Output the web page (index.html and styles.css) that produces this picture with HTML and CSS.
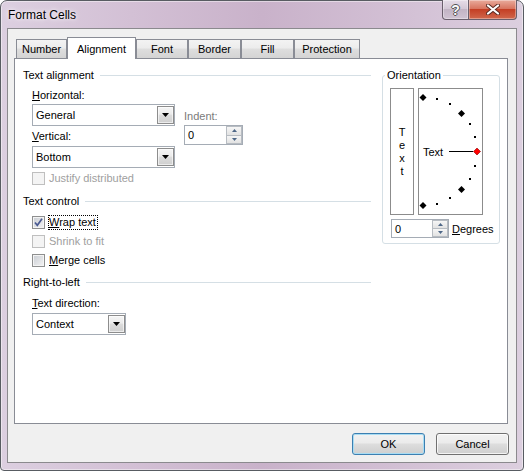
FILE: index.html
```html
<!DOCTYPE html>
<html>
<head>
<meta charset="utf-8">
<title>Format Cells</title>
<link rel="stylesheet" href="styles.css">
</head>
<body>
<div class="window">
  <div class="titlebar">
    <div class="title">Format Cells</div>
    <div class="caption-btns">
      <div class="cbtn help"><span>?</span></div>
      <div class="cbtn close">
        <svg width="14" height="11" viewBox="0 0 14 11">
          <path d="M2 1.5 L12 9.5 M12 1.5 L2 9.5" stroke="#5a2a22" stroke-width="4" stroke-linecap="round"/>
          <path d="M2 1.5 L12 9.5 M12 1.5 L2 9.5" stroke="#ffffff" stroke-width="2.2" stroke-linecap="round"/>
        </svg>
      </div>
    </div>
  </div>
  <div class="client">
    <div class="tabs">
      <div class="tab t-number">Number</div>
      <div class="tab sel t-align">Alignment</div>
      <div class="tab t-font">Font</div>
      <div class="tab t-border">Border</div>
      <div class="tab t-fill">Fill</div>
      <div class="tab t-prot">Protection</div>
    </div>
    <div class="panel">
      <div class="leftcol">
        <div class="shead">Text alignment</div>
        <div class="align-body">
          <div class="align-left">
            <div class="lbl lbl-h"><u>H</u>orizontal:</div>
            <div class="combo combo-h"><span>General</span><span class="dd"><svg width="7" height="4" viewBox="0 0 7 4"><path d="M0 0h7l-3.5 4z"/></svg></span></div>
            <div class="lbl lbl-v"><u>V</u>ertical:</div>
            <div class="combo combo-v"><span>Bottom</span><span class="dd"><svg width="7" height="4" viewBox="0 0 7 4"><path d="M0 0h7l-3.5 4z"/></svg></span></div>
          </div>
          <div class="indent">
            <div class="lbl gray">Indent:</div>
            <div class="spin spin-indent"><span>0</span>
              <span class="spinbtns">
                <b><svg width="5" height="3" viewBox="0 0 5 3"><path d="M0 3h5L2.5 0z"/></svg></b>
                <b><svg width="5" height="3" viewBox="0 0 5 3"><path d="M0 0h5L2.5 3z"/></svg></b>
              </span>
            </div>
          </div>
        </div>
        <div class="crow r-justify disabled"><span class="cb"></span><span class="clbl">Justify distributed</span></div>
        <div class="shead h-control">Text control</div>
        <div class="crow r-wrap"><span class="cb"><svg width="11" height="11" viewBox="0 0 11 11"><path d="M2 5.5 L4.3 8.3 L9 1.8" fill="none" stroke="#4a5a92" stroke-width="1.7"/></svg></span><span class="clbl focus"><u>W</u>rap text</span></div>
        <div class="crow r-shrink disabled"><span class="cb"></span><span class="clbl">Shrink to fit</span></div>
        <div class="crow r-merge"><span class="cb"></span><span class="clbl"><u>M</u>erge cells</span></div>
        <div class="shead h-rtl">Right-to-left</div>
        <div class="lbl lbl-dir"><u>T</u>ext direction:</div>
        <div class="combo combo-dir"><span>Context</span><span class="dd"><svg width="7" height="4" viewBox="0 0 7 4"><path d="M0 0h7l-3.5 4z"/></svg></span></div>
      </div>
      <div class="rightcol">
        <div class="group">
          <div class="legend">Orientation</div>
          <div class="orient">
            <div class="vtext"><span>T</span><span>e</span><span>x</span><span>t</span></div>
            <div class="dial">
              <svg width="63" height="125" viewBox="0 0 63 125">
                <g fill="#000">
                  <polygon points="4,5 7.5,8.5 4,12 0.5,8.5"/>
                  <polygon points="42.5,21 46,24.5 42.5,28 39,24.5"/>
                  <polygon points="42.5,97 46,100.5 42.5,104 39,100.5"/>
                  <polygon points="4,113 7.5,116.5 4,120 0.5,116.5"/>
                  <rect x="17" y="9" width="2" height="2"/>
                  <rect x="30" y="14" width="2" height="2"/>
                  <rect x="50" y="34" width="2" height="2"/>
                  <rect x="55" y="47" width="2" height="2"/>
                  <rect x="55" y="76" width="2" height="2"/>
                  <rect x="50" y="89" width="2" height="2"/>
                  <rect x="30" y="108" width="2" height="2"/>
                  <rect x="17" y="114" width="2" height="2"/>
                  <rect x="30" y="62" width="24" height="1"/>
                </g>
                <polygon points="58,59 61.5,62.5 58,66 54.5,62.5" fill="#ff0000" stroke="#8a0000" stroke-width="0.6"/>
                <text x="4" y="67" class="dial-text">Text</text>
              </svg>
            </div>
          </div>
          <div class="degrow">
            <div class="spin spin-deg"><span>0</span>
              <span class="spinbtns">
                <b><svg width="5" height="3" viewBox="0 0 5 3"><path d="M0 3h5L2.5 0z"/></svg></b>
                <b><svg width="5" height="3" viewBox="0 0 5 3"><path d="M0 0h5L2.5 3z"/></svg></b>
              </span>
            </div>
            <span class="deglbl"><u>D</u>egrees</span>
          </div>
        </div>
      </div>
    </div>
    <div class="btnrow">
      <div class="btn def">OK</div>
      <div class="btn">Cancel</div>
    </div>
  </div>
</div>
</body>
</html>
```

FILE: styles.css
```css
* { box-sizing: border-box; }
html, body { margin: 0; padding: 0; }
body {
  width: 524px;
  height: 471px;
  overflow: hidden;
  background: #ffffff;
  font-family: "Liberation Sans", Arial, sans-serif;
  font-size: 11px;
  color: #000;
}
u { text-decoration: underline; text-underline-offset: 1px; }

.window {
  width: 524px;
  height: 471px;
  border: 1px solid #585c62;
  border-radius: 7px 7px 4px 4px;
  background: linear-gradient(90deg, #dccfe0 0%, #d3c0d5 25%, #c9b2ca 50%, #d2bfd4 75%, #dccfdf 100%);
  box-shadow: inset 0 0 0 1px rgba(255, 255, 255, 0.45);
  padding: 0 6px 7px 6px;
  display: flex;
  flex-direction: column;
}

.titlebar {
  height: 27px;
  display: flex;
  justify-content: space-between;
  align-items: flex-start;
}
.title {
  margin: 7px 0 0 1px;
  font-size: 12px;
  line-height: 14px;
  color: #000;
  text-shadow: 0 0 6px #fff, 0 0 3px #f4eef5;
}
.caption-btns {
  display: flex;
  margin-top: -1px;
}
.cbtn {
  height: 20px;
  border: 1px solid #6a5f6c;
  border-top: none;
  display: flex;
  align-items: center;
  justify-content: center;
  box-shadow: inset 0 0 0 1px rgba(255, 255, 255, 0.35);
}
.help {
  width: 27px;
  border-radius: 0 0 0 4px;
  background: linear-gradient(#e6dde8, #d4c8d6 45%, #c2b4c4 50%, #d0c3d2);
}
.help span {
  font-weight: bold;
  font-size: 14px;
  line-height: 14px;
  color: #fafafa;
  text-shadow: 1px 0 0 #555, -1px 0 0 #555, 0 1px 0 #555, 0 -1px 0 #555;
}
.close {
  width: 48px;
  border-left: none;
  border-radius: 0 0 4px 0;
  background: linear-gradient(#e9ab9c, #d87560 45%, #c43f25 50%, #d1674c);
}

.client {
  flex: 1;
  border: 1px solid #8b8a8e;
  background: #f0f0f0;
  padding: 8px 8px 7px 6px;
  display: flex;
  flex-direction: column;
}

/* tabs */
.tabs {
  display: flex;
  align-items: flex-end;
  height: 22px;
  margin: 0 0 -1px 2px;
  position: relative;
  z-index: 1;
}
.tab {
  height: 19px;
  margin-bottom: 1px;
  border: 1px solid #898c95;
  border-bottom: none;
  background: linear-gradient(#f3f3f3, #ececec 45%, #dedede 50%, #d4d4d4);
  text-align: center;
  padding-top: 1px;
  line-height: 17px;
  white-space: nowrap;
}
.tab.sel {
  height: 22px;
  margin-bottom: 0;
  background: #fff;
  padding-top: 3px;
}
.t-number { width: 51px; }
.t-align { width: 69px; }
.t-font { width: 52px; }
.t-border { width: 53px; }
.t-fill { width: 53px; }
.t-prot { width: 66px; }

.panel {
  height: 366px;
  border: 1px solid #898c95;
  background: #fff;
  display: flex;
  padding: 10px 7px 0 8px;
}
.leftcol {
  width: 348px;
  display: flex;
  flex-direction: column;
}
.rightcol {
  width: 118px;
  margin-left: 11px;
  padding-top: 6px;
}

.shead {
  display: flex;
  align-items: center;
  height: 13px;
  line-height: 13px;
  white-space: nowrap;
}
.shead::after {
  content: "";
  flex: 1;
  border-top: 1px solid #d5dfe5;
  margin-left: 6px;
}
.h-control { margin-top: 10px; }
.h-rtl { margin-top: 9px; }

.lbl {
  height: 13px;
  line-height: 13px;
  white-space: nowrap;
}
.gray { color: #7a7a7a; }

.align-body {
  display: flex;
  margin-left: 9px;
}
.align-left {
  width: 143px;
  display: flex;
  flex-direction: column;
}
.lbl-h { margin-top: 7px; }
.combo-h { margin-top: 2px; }
.lbl-v { margin-top: 4px; }
.combo-v { margin-top: 3px; }
.indent {
  margin-left: 9px;
  padding-top: 28px;
}
.indent .spin { margin-top: 2px; }

.combo {
  width: 143px;
  height: 22px;
  border: 1px solid #a5acb5;
  background: #fff;
  display: flex;
  align-items: center;
  justify-content: space-between;
  padding: 0 0 0 3px;
}
.combo-dir {
  width: 94px;
  margin: 3px 0 0 9px;
}
.lbl-dir { margin: 8px 0 0 9px; }
.dd {
  width: 17px;
  height: 18px;
  border: 1px solid #8d8d8d;
  background: linear-gradient(#f5f5f5, #ebebeb 45%, #dcdcdc 50%, #cfcfcf);
  display: flex;
  align-items: center;
  justify-content: center;
  box-shadow: inset 0 0 0 1px rgba(255, 255, 255, 0.6);
}
.dd svg { display: block; fill: #000; }

.spin {
  height: 20px;
  border: 1px solid #a5acb5;
  background: #fff;
  display: flex;
  align-items: center;
  justify-content: space-between;
  padding: 0 0 0 3px;
}
.spin-indent { width: 59px; }
.spinbtns {
  width: 16px;
  height: 18px;
  display: flex;
  flex-direction: column;
}
.spinbtns b {
  flex: 1;
  border: 1px solid #b7bcc2;
  background: linear-gradient(#f6f6f6, #e2e2e2);
  display: flex;
  align-items: center;
  justify-content: center;
}
.spinbtns b + b { border-top: none; }
.spinbtns svg { display: block; fill: #4e6787; }

/* checkbox rows */
.crow {
  display: flex;
  align-items: center;
  height: 13px;
  margin-left: 9px;
  white-space: nowrap;
}
.r-justify { margin-top: 4px; }
.r-wrap { margin-top: 8px; }
.r-shrink { margin-top: 6px; }
.r-merge { margin-top: 6px; }
.cb {
  width: 13px;
  height: 13px;
  border: 1px solid #8e8f8f;
  background: linear-gradient(135deg, #c9cdd3, #f3f3f4);
  box-shadow: inset 0 0 0 1px #f4f4f4;
  display: flex;
  align-items: center;
  justify-content: center;
}
.cb svg { display: block; }
.clbl {
  margin-left: 4px;
  line-height: 13px;
}
.focus { outline: 1px dotted #000; outline-offset: 0; padding: 0 1px 0 0; }
.disabled { color: #a0a0a0; }
.disabled .cb {
  border-color: #bfbfbf;
  background: #f4f4f4;
  box-shadow: none;
}

/* orientation */
.group {
  height: 169px;
  border: 1px solid #d5dfe5;
  border-radius: 3px;
  display: flex;
  flex-direction: column;
}
.legend {
  width: max-content;
  height: 13px;
  line-height: 13px;
  margin: -7px 0 0 2px;
  padding: 0 2px;
  background: #fff;
}
.orient {
  display: flex;
  gap: 4px;
  margin: 6px 0 0 7px;
}
.vtext {
  width: 24px;
  height: 127px;
  border: 1px solid #8c8c8c;
  display: flex;
  flex-direction: column;
  align-items: center;
  justify-content: center;
  line-height: 13px;
}
.dial {
  width: 65px;
  height: 127px;
  border: 1px solid #8c8c8c;
}
.dial svg { display: block; }
.dial-text {
  font-family: "Liberation Sans", Arial, sans-serif;
  font-size: 11px;
  fill: #000;
}
.degrow {
  display: flex;
  align-items: center;
  margin: 4px 0 0 8px;
}
.spin-deg {
  width: 58px;
  height: 19px;
}
.spin-deg .spinbtns { height: 17px; }
.deglbl { margin-left: 3px; }

/* buttons */
.btnrow {
  display: flex;
  justify-content: flex-end;
  gap: 11px;
  margin: 9px -1px 0 0;
}
.btn {
  width: 73px;
  height: 22px;
  border: 1px solid #707070;
  border-radius: 3px;
  background: linear-gradient(#f2f2f2, #ebebeb 45%, #dddddd 50%, #cfcfcf);
  box-shadow: inset 0 0 0 1px rgba(255, 255, 255, 0.75);
  display: flex;
  align-items: center;
  justify-content: center;
}
.btn.def {
  border-color: #3c7fb1;
  box-shadow: inset 0 0 0 1px #a8dcf3;
}
```
